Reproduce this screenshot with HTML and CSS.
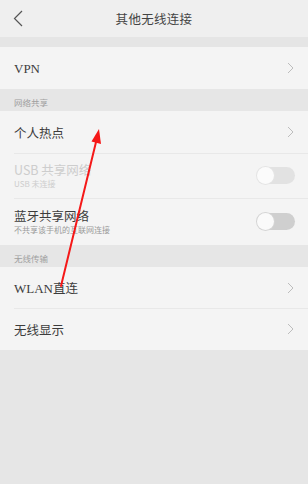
FILE: index.html
```html
<!DOCTYPE html>
<html lang="zh-CN">
<head>
<meta charset="utf-8">
<title>其他无线连接</title>
<link rel="stylesheet" href="styles.css">
</head>
<body>
<div class="screen">
  <header class="topbar">
    <svg class="back" width="10" height="17" viewBox="0 0 10 17"><path d="M9 1 L1.5 8.5 L9 16" fill="none" stroke="#555" stroke-width="1.2"/></svg>
    <h1 class="title">其他无线连接</h1>
  </header>
  <div class="gap"></div>

  <div class="group">
    <div class="row row-vpn"><span class="label latin">VPN</span><svg class="chev" width="7" height="12" viewBox="0 0 7 12"><path d="M1 1 L6 6 L1 11" fill="none" stroke="#bdbdbd" stroke-width="1"/></svg></div>
  </div>

  <div class="section">网络共享</div>
  <div class="group">
    <div class="row row-hot"><span class="label">个人热点</span><svg class="chev" width="7" height="12" viewBox="0 0 7 12"><path d="M1 1 L6 6 L1 11" fill="none" stroke="#bdbdbd" stroke-width="1"/></svg></div>
    <div class="row row-usb disabled">
      <div class="texts"><span class="label">USB 共享网络</span><span class="sub">USB 未连接</span></div>
      <span class="toggle"></span>
    </div>
    <div class="row row-bt">
      <div class="texts"><span class="label">蓝牙共享网络</span><span class="sub">不共享该手机的互联网连接</span></div>
      <span class="toggle"></span>
    </div>
  </div>

  <div class="section">无线传输</div>
  <div class="group">
    <div class="row row-wlan"><span class="label"><span class="latin">WLAN</span>直连</span><svg class="chev" width="7" height="12" viewBox="0 0 7 12"><path d="M1 1 L6 6 L1 11" fill="none" stroke="#bdbdbd" stroke-width="1"/></svg></div>
    <div class="row row-disp"><span class="label">无线显示</span><svg class="chev" width="7" height="12" viewBox="0 0 7 12"><path d="M1 1 L6 6 L1 11" fill="none" stroke="#bdbdbd" stroke-width="1"/></svg></div>
  </div>

  <svg class="annot" width="308" height="484" viewBox="0 0 308 484">
    <line x1="61" y1="286" x2="96.5" y2="140" stroke="#f51818" stroke-width="2" stroke-linecap="round"/>
    <polygon points="99,129 101,144 91.5,141.5" fill="#f51818"/>
  </svg>
</div>
</body>
</html>
```

FILE: styles.css
```css
* { box-sizing: border-box; margin: 0; padding: 0; }
html, body { width: 308px; height: 484px; overflow: hidden; }
body {
  background: #e6e6e6;
  font-family: "Noto Sans CJK SC", "DejaVu Sans", sans-serif;
  color: #3a3a3a;
}
.screen { position: relative; width: 308px; height: 484px; background: #e6e6e6; }
.topbar {
  height: 37px;
  background: #efefef;
  display: flex;
  align-items: center;
  justify-content: center;
  position: relative;
}
.back { position: absolute; left: 13px; top: 10px; }
.title { font-size: 12.5px; font-weight: normal; color: #444; letter-spacing: 0.3px; }
.gap { height: 10px; background: #e5e5e5; }
.group { background: #f4f4f4; }
.row {
  display: flex;
  align-items: center;
  justify-content: space-between;
  padding: 0 14px 0 14px;
  position: relative;
}
.row + .row::before {
  content: "";
  position: absolute;
  left: 14px; right: 0; top: 0;
  height: 1px;
  background: #e8e8e8;
}
.row-vpn { height: 42px; }
.row-hot { height: 42px; }
.row-usb { height: 45px; }
.row-bt { height: 47px; }
.row-wlan { height: 41px; }
.row-disp { height: 42px; }
.label { font-size: 12.5px; color: #3c3c3c; line-height: 15px; }
.latin { font-family: "Liberation Serif", serif; font-size: 13px; }
.texts { display: flex; flex-direction: column; }
.sub { font-size: 8px; color: #9a9a9a; line-height: 11px; margin-top: 1px; }
.disabled .label, .disabled .sub { color: #cdcdcd; }
.chev { display: block; margin-right: 0; }
.toggle {
  width: 38px; height: 17px;
  border-radius: 9px;
  background: #cfcfcf;
  position: relative;
  margin-right: -1px;
}
.toggle::after {
  content: "";
  position: absolute;
  left: 0; top: 0;
  width: 17px; height: 17px;
  border-radius: 50%;
  background: #fafafa;
  box-shadow: 0 0 0 1px #d4d4d4;
}
.disabled .toggle { background: #e2e2e2; }
.disabled .toggle::after { background: #fbfbfb; box-shadow: 0 0 0 1px #e4e4e4; }
.section {
  height: 22px;
  padding: 7px 14px 0;
  font-size: 8.5px;
  color: #a0a0a0;
  background: #e6e6e6;
  line-height: 12px;
}
.annot { position: absolute; left: 0; top: 0; pointer-events: none; }
```
